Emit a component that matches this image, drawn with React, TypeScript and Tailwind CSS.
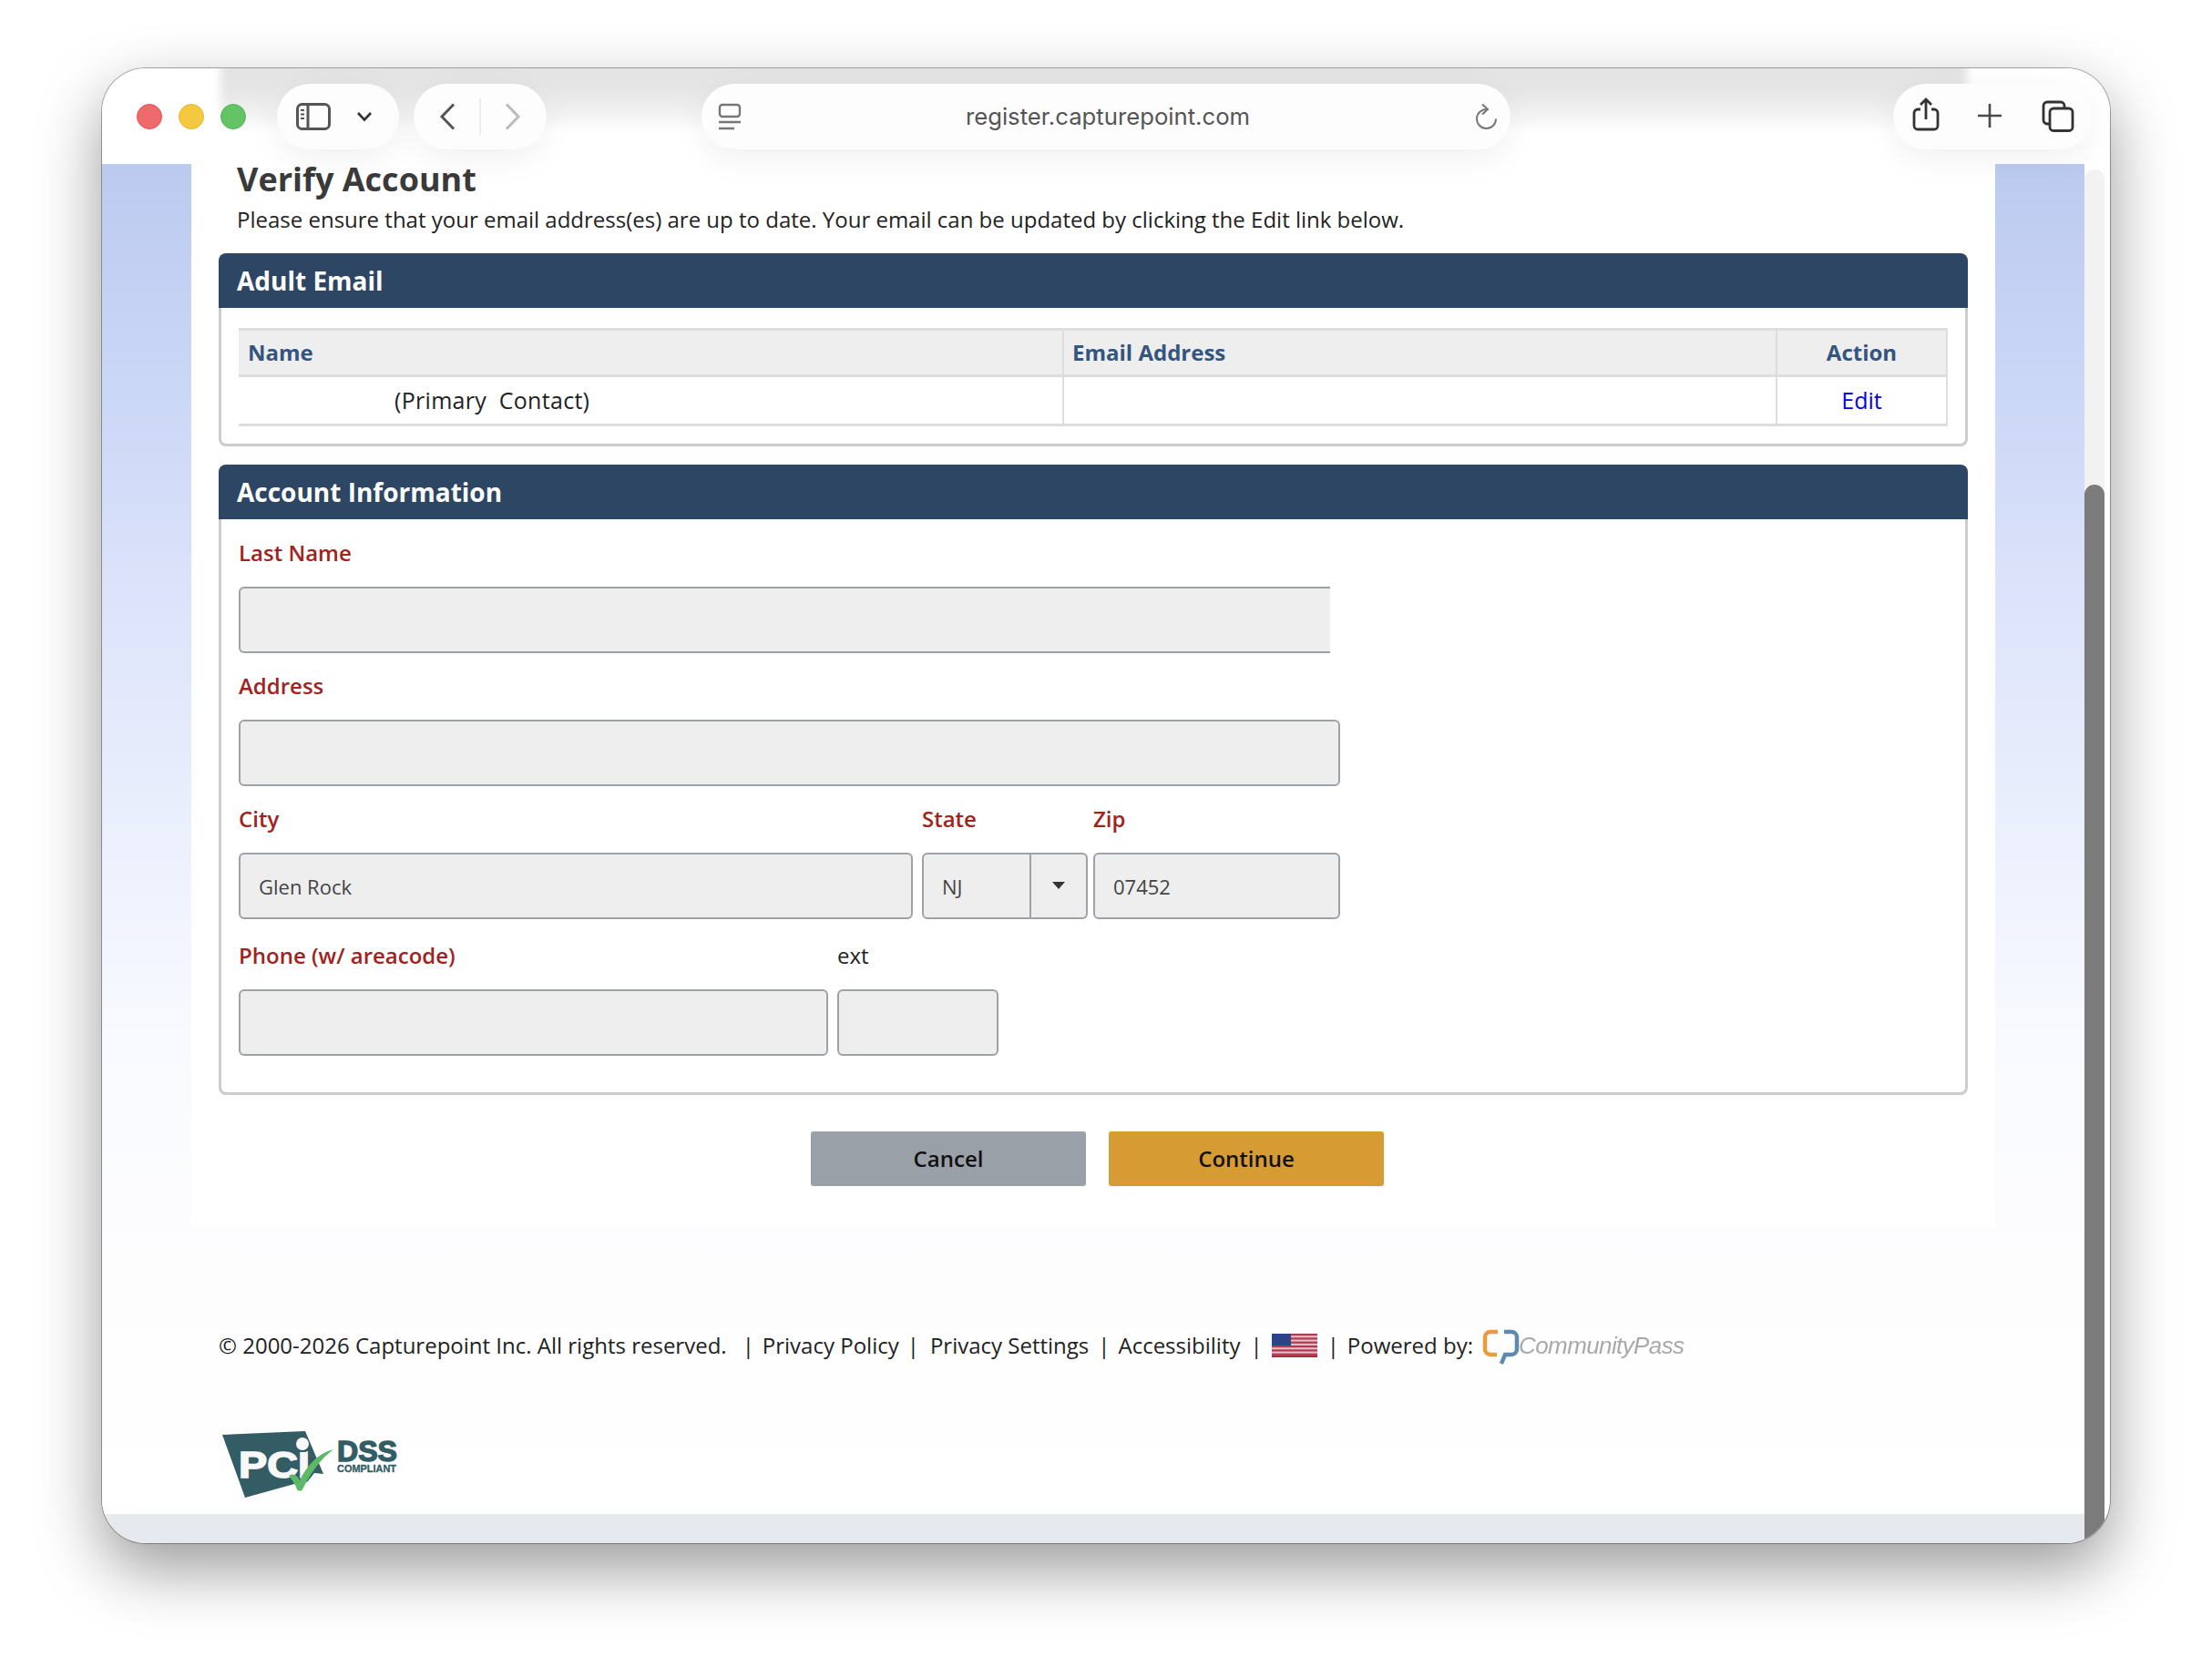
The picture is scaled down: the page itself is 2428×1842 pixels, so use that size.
import React from "react";

const sans = "font-['Open_Sans',sans-serif]";

function TrafficLights() {
  return (
    <div className="flex gap-[18px] ml-[38px]">
      <div className="w-[28px] h-[28px] rounded-full bg-[#ef6a6a] border border-[#e2514f]" />
      <div className="w-[28px] h-[28px] rounded-full bg-[#f4c93f] border border-[#e5b62f]" />
      <div className="w-[28px] h-[28px] rounded-full bg-[#62c465] border border-[#52b556]" />
    </div>
  );
}

function SidebarIcon() {
  return (
    <svg width="38" height="30" viewBox="0 0 38 30" fill="none" stroke="#555" strokeWidth="3" className="shrink-0">
      <rect x="1.5" y="1.5" width="35" height="27" rx="5" />
      <path d="M13 2v26" />
      <path d="M5 8h4M5 12.5h4M5 17h4" strokeWidth="2" />
    </svg>
  );
}

function ToolbarPill({ className, children }: { className: string; children: React.ReactNode }) {
  return (
    <div className={`h-[72px] rounded-[36px] bg-[#fdfdfd] shadow-[0_10px_36px_rgba(0,0,0,0.06)] flex items-center shrink-0 ${className}`}>
      {children}
    </div>
  );
}

function Toolbar() {
  return (
    <div className="relative z-10 h-[105px] shrink-0 bg-white pt-[17px] flex items-start">
      <div className="absolute left-[130px] right-[157px] top-[-10px] h-[74px] bg-gradient-to-b from-[#e2e2e2] via-[#e6e6e6] to-[#fafafa] blur-[5px]" />
      <div className="relative flex items-center h-[72px]">
        <TrafficLights />
        <ToolbarPill className="ml-[34px] w-[134px] pl-[21px]">
          <SidebarIcon />
          <svg className="ml-[28px] shrink-0" width="18" height="12" viewBox="0 0 18 12" fill="none" stroke="#333" strokeWidth="2.6">
            <path d="M2 2l7 7.5L16 2" />
          </svg>
        </ToolbarPill>
        <ToolbarPill className="ml-[16px] w-[146px] pl-[28px]">
          <svg width="18" height="30" viewBox="0 0 18 30" fill="none" stroke="#555" strokeWidth="3" className="shrink-0">
            <path d="M16 1.5 3 15l13 13.5" />
          </svg>
          <div className="w-[2px] h-[40px] bg-[#eeeeee] ml-[26px]" />
          <svg width="18" height="30" viewBox="0 0 18 30" fill="none" stroke="#bbbbbb" strokeWidth="3" className="ml-[26px] shrink-0">
            <path d="M2 1.5 15 15 2 28.5" />
          </svg>
        </ToolbarPill>
        <ToolbarPill className="ml-[170px] w-[888px] pl-[18px] pr-[14px] justify-between">
          <svg width="26" height="30" viewBox="0 0 26 30" fill="none" stroke="#777" strokeWidth="2.4">
            <rect x="2" y="2" width="22" height="13" rx="3" />
            <path d="M1 21h24M1 28h17" />
          </svg>
          <span className="font-['Inter',sans-serif] text-[25.7px] text-[#555]">register.capturepoint.com</span>
          <svg width="26" height="30" viewBox="0 0 26 30" fill="none" stroke="#777" strokeWidth="2">
            <path d="M14 7A10.5 10.5 0 1 0 24 17.5" />
            <path d="M9 1.5 15 7l-6 5.5" />
          </svg>
        </ToolbarPill>
        <ToolbarPill className="ml-[420px] w-[218px] pl-[21px]">
          <svg width="30" height="37" viewBox="0 0 30 37" fill="none" stroke="#333" strokeWidth="2.8" className="shrink-0 mb-[5px]">
            <path d="M9 13H6a4 4 0 0 0-4 4v14a4 4 0 0 0 4 4h18a4 4 0 0 0 4-4V17a4 4 0 0 0-4-4h-3" />
            <path d="M15 24V2M9 8l6-6 6 6" />
          </svg>
          <svg width="28" height="28" viewBox="0 0 28 28" fill="none" stroke="#4a4a4a" strokeWidth="2.6" className="ml-[41px] shrink-0 mb-[2px]">
            <path d="M14 1v26M1 14h26" />
          </svg>
          <svg className="ml-[43px] shrink-0 mb-[2px]" width="36" height="35" viewBox="0 0 36 35" fill="none" stroke="#333" strokeWidth="2.8">
            <rect x="9" y="9" width="25" height="24.5" rx="4" />
            <path d="M9 26H6a4 4 0 0 1-4-4V6a4 4 0 0 1 4-4h15a4 4 0 0 1 4 4v3" />
          </svg>
        </ToolbarPill>
      </div>
    </div>
  );
}

function SectionHeader({ title }: { title: string }) {
  return (
    <div className="h-[60px] bg-[#2c4663] rounded-t-[8px] pl-[20px] flex items-center text-white text-[28px] font-bold">
      {title}
    </div>
  );
}

function EmailTable() {
  return (
    <div className="border-[3px] border-t-0 border-[#cccccc] rounded-b-[8px] px-[19px] pt-[22px] h-[152px]">
      <div className="grid grid-cols-[904px_783px_189px] text-[24px]">
        <div className="h-[54px] bg-[#eeeeee] border-y-[3px] border-[#dddddd] flex items-center pl-[10px] font-bold text-[#34557f]">Name</div>
        <div className="h-[54px] bg-[#eeeeee] border-y-[3px] border-l-[2px] border-[#dddddd] flex items-center pl-[9px] font-bold text-[#34557f]">Email Address</div>
        <div className="h-[54px] bg-[#eeeeee] border-y-[3px] border-x-[2px] border-[#dddddd] flex items-center justify-center font-bold text-[#34557f]">Action</div>
        <div className="h-[54px] border-b-[3px] border-[#dddddd] flex items-center pl-[171px] text-[25px] tracking-[0.3px] text-[#222] whitespace-pre">(Primary  Contact)</div>
        <div className="h-[54px] border-b-[3px] border-l-[2px] border-[#dddddd]" />
        <div className="h-[54px] border-b-[3px] border-x-[2px] border-[#dddddd] flex items-center justify-center text-[25px] text-[#0000ee]">Edit</div>
      </div>
    </div>
  );
}

function Field({ label, plain, width, value, noRight }: { label: string; plain?: boolean; width: string; value?: string; noRight?: boolean }) {
  return (
    <div className={`flex flex-col shrink-0 ${width}`}>
      <div className={`h-[37px] flex items-center text-[24px] whitespace-nowrap ${plain ? "text-[#222]" : "font-semibold text-[#a0231d]"}`}>{label}</div>
      <div className={`mt-[19px] h-[73px] bg-[#eeeeee] border-[2px] border-[#9ea2a6] flex items-center pl-[20px] pt-[1px] text-[22px] text-[#444] ${noRight ? "rounded-l-[6px] border-r-0" : "rounded-[6px]"}`}>
        {value}
      </div>
    </div>
  );
}

function StateField() {
  return (
    <div className="flex flex-col w-[182px] shrink-0 ml-[10px] mr-[6px]">
      <div className="h-[37px] flex items-center text-[24px] font-semibold text-[#a0231d]">State</div>
      <div className="mt-[19px] h-[73px] bg-[#eeeeee] border-[2px] border-[#9ea2a6] rounded-[6px] flex items-center text-[22px] text-[#444]">
        <div className="w-[118px] pl-[20px] pt-[1px] h-full flex items-center border-r-[2px] border-[#9ea2a6]">NJ</div>
        <div className="flex-1 flex justify-center pb-[2px]">
          <svg width="14" height="8" viewBox="0 0 14 8"><path d="M0 0h14L7 8z" fill="#333" /></svg>
        </div>
      </div>
    </div>
  );
}

function AccountForm() {
  return (
    <div className="border-[3px] border-t-0 border-[#cccccc] rounded-b-[8px] pl-[19px] pt-[18px] h-[632px] flex flex-col">
      <Field label="Last Name" width="w-[1198px]" noRight />
      <div className="mt-[17px]"><Field label="Address" width="w-[1209px]" /></div>
      <div className="mt-[17px] flex">
        <Field label="City" width="w-[740px]" value="Glen Rock" />
        <StateField />
        <Field label="Zip" width="w-[271px]" value="07452" />
      </div>
      <div className="mt-[21px] flex">
        <Field label="Phone (w/ areacode)" width="w-[647px]" />
        <div className="ml-[10px]"><Field label="ext" plain width="w-[177px]" /></div>
      </div>
    </div>
  );
}

function PciLogo() {
  return (
    <svg width="200" height="90" viewBox="0 0 200 90">
      <path d="M4 9 95 5l20 47-10-1-8 10-3-1-65 18z" fill="#335c64" />
      <text x="22" y="56" fontFamily="Liberation Sans" fontWeight="700" fontSize="40" fill="#f8f8f8" stroke="#f8f8f8" strokeWidth="1.6" textLength="78" lengthAdjust="spacingAndGlyphs">PCI</text>
      <rect x="80" y="10" width="16" height="18" fill="#335c64" />
      <circle cx="92" cy="19" r="7" fill="#f8f8f8" />
      <path d="M77 54c5-3 9-1 12 5 8-16 20-30 37-34-15 11-26 28-34 44-1 2-5 2-6 0-2-6-5-10-9-15z" fill="#5cb968" />
      <text x="130" y="38" fontFamily="Liberation Sans" fontWeight="700" fontSize="31" fill="#335c64" stroke="#335c64" strokeWidth="1.4" textLength="66" lengthAdjust="spacingAndGlyphs">DSS</text>
      <text x="130" y="50" fontFamily="Liberation Sans" fontWeight="700" fontSize="11" fill="#335c64" stroke="#335c64" strokeWidth="0.3" textLength="65" lengthAdjust="spacingAndGlyphs">COMPLIANT</text>
    </svg>
  );
}

function UsFlag() {
  return (
    <svg width="50" height="26" viewBox="0 0 50 30" preserveAspectRatio="none" className="shrink-0">
      <rect width="50" height="30" fill="#e6bcc6" />
      {[0, 5, 10, 15, 20, 25].map((y) => (
        <rect key={y} y={y} width="50" height="2.5" fill="#b0384f" />
      ))}
      <rect y="27.5" width="50" height="2.5" fill="#a92c44" />
      <rect width="21" height="15" fill="#2f4488" />
    </svg>
  );
}

function CommunityPassLogo() {
  return (
    <div className="flex items-center w-[224px] shrink-0 ml-[10px] h-[40px]">
      <svg width="41" height="40" viewBox="0 0 41 40" fill="none" className="shrink-0 mt-[4px]">
        <path d="M17 3H9a6 6 0 0 0-6 6v13a6 6 0 0 0 6 6h7" stroke="#ec9a3e" strokeWidth="4.5" />
        <path d="M24 3h8a6 6 0 0 1 6 6v13a6 6 0 0 1-6 6h-7l-4 10" stroke="#5b8cb0" strokeWidth="4.5" />
      </svg>
      <span className="ml-[-1px] font-['Liberation_Sans',sans-serif] italic text-[26px] tracking-[-0.6px] text-[#a9a9a9] whitespace-nowrap blur-[0.4px]">CommunityPass</span>
    </div>
  );
}

function Footer() {
  return (
    <div className="pl-[128px] pt-[110px]">
      <div className="h-[40px] flex items-center text-[24px] text-[#222] whitespace-nowrap">
        <span>© 2000-2026 Capturepoint Inc. All rights reserved.</span>
        <span className="ml-[17px]">|</span>
        <span className="ml-[9px]">Privacy Policy</span>
        <span className="ml-[9px]">|</span>
        <span className="ml-[12px]">Privacy Settings</span>
        <span className="ml-[10px]">|</span>
        <span className="ml-[9px]">Accessibility</span>
        <span className="ml-[11px]">|</span>
        <span className="ml-[10px] flex"><UsFlag /></span>
        <span className="ml-[11px]">|</span>
        <span className="ml-[9px]">Powered by:</span>
        <CommunityPassLogo />
      </div>
      <div className="mt-[69px]">
        <PciLogo />
      </div>
    </div>
  );
}

function Page() {
  return (
    <div className="flex-1 min-w-0 flex flex-col">
      <div className="flex-1 min-h-0 bg-[linear-gradient(180deg,#bccaf0_0%,#ccd8f7_18%,#dde3fa_32%,#f0f4fe_55%,#f9faff_65%,#fdfdfe_82%,#ffffff_100%)]">
        <div className="mx-[98px] h-[1172px] bg-white px-[30px]">
          <div className="pl-[20px]">
            <h1 className="text-[36px] leading-[44px] -mt-[5px] font-bold text-[#3a3a3a]">Verify Account</h1>
            <p className="text-[24px] leading-[32px] mt-[6px] text-[#222] whitespace-nowrap">Please ensure that your email address(es) are up to date. Your email can be updated by clicking the Edit link below.</p>
          </div>
          <div className="mt-[21px]">
            <SectionHeader title="Adult Email" />
            <EmailTable />
          </div>
          <div className="mt-[20px]">
            <SectionHeader title="Account Information" />
            <AccountForm />
          </div>
          <div className="mt-[40px] flex justify-center gap-[25px] pl-[9px] text-[24px] font-semibold text-[#111]">
            <button className="w-[302px] h-[60px] rounded-[3px] bg-[#9aa0a8]">Cancel</button>
            <button className="w-[302px] h-[60px] rounded-[3px] bg-[#d79b33]">Continue</button>
          </div>
        </div>
        <Footer />
      </div>
      <div className="h-[32px] shrink-0 bg-[#e6eaee]" />
    </div>
  );
}

function Scrollbar() {
  return (
    <div className="w-[22px] shrink-0 flex flex-col pt-[6px]">
      <div className="flex-1 bg-[#f2f2f2] rounded-t-[11px] flex flex-col pt-[346px]">
        <div className="flex-1 bg-[#7b7b7b] rounded-t-[11px]" />
      </div>
    </div>
  );
}

export default function App() {
  return (
    <div className={`w-[2428px] h-[1842px] bg-white pt-[75px] pl-[112px] overflow-hidden ${sans}`}>
      <div className="w-[2204px] h-[1619px] rounded-[48px] overflow-hidden bg-white flex flex-col shadow-[0_28px_70px_rgba(0,0,0,0.4),0_0_0_1px_rgba(120,120,120,0.6)]">
        <Toolbar />
        <div className="flex-1 flex min-h-0 pr-[6px]">
          <Page />
          <Scrollbar />
        </div>
      </div>
    </div>
  );
}
